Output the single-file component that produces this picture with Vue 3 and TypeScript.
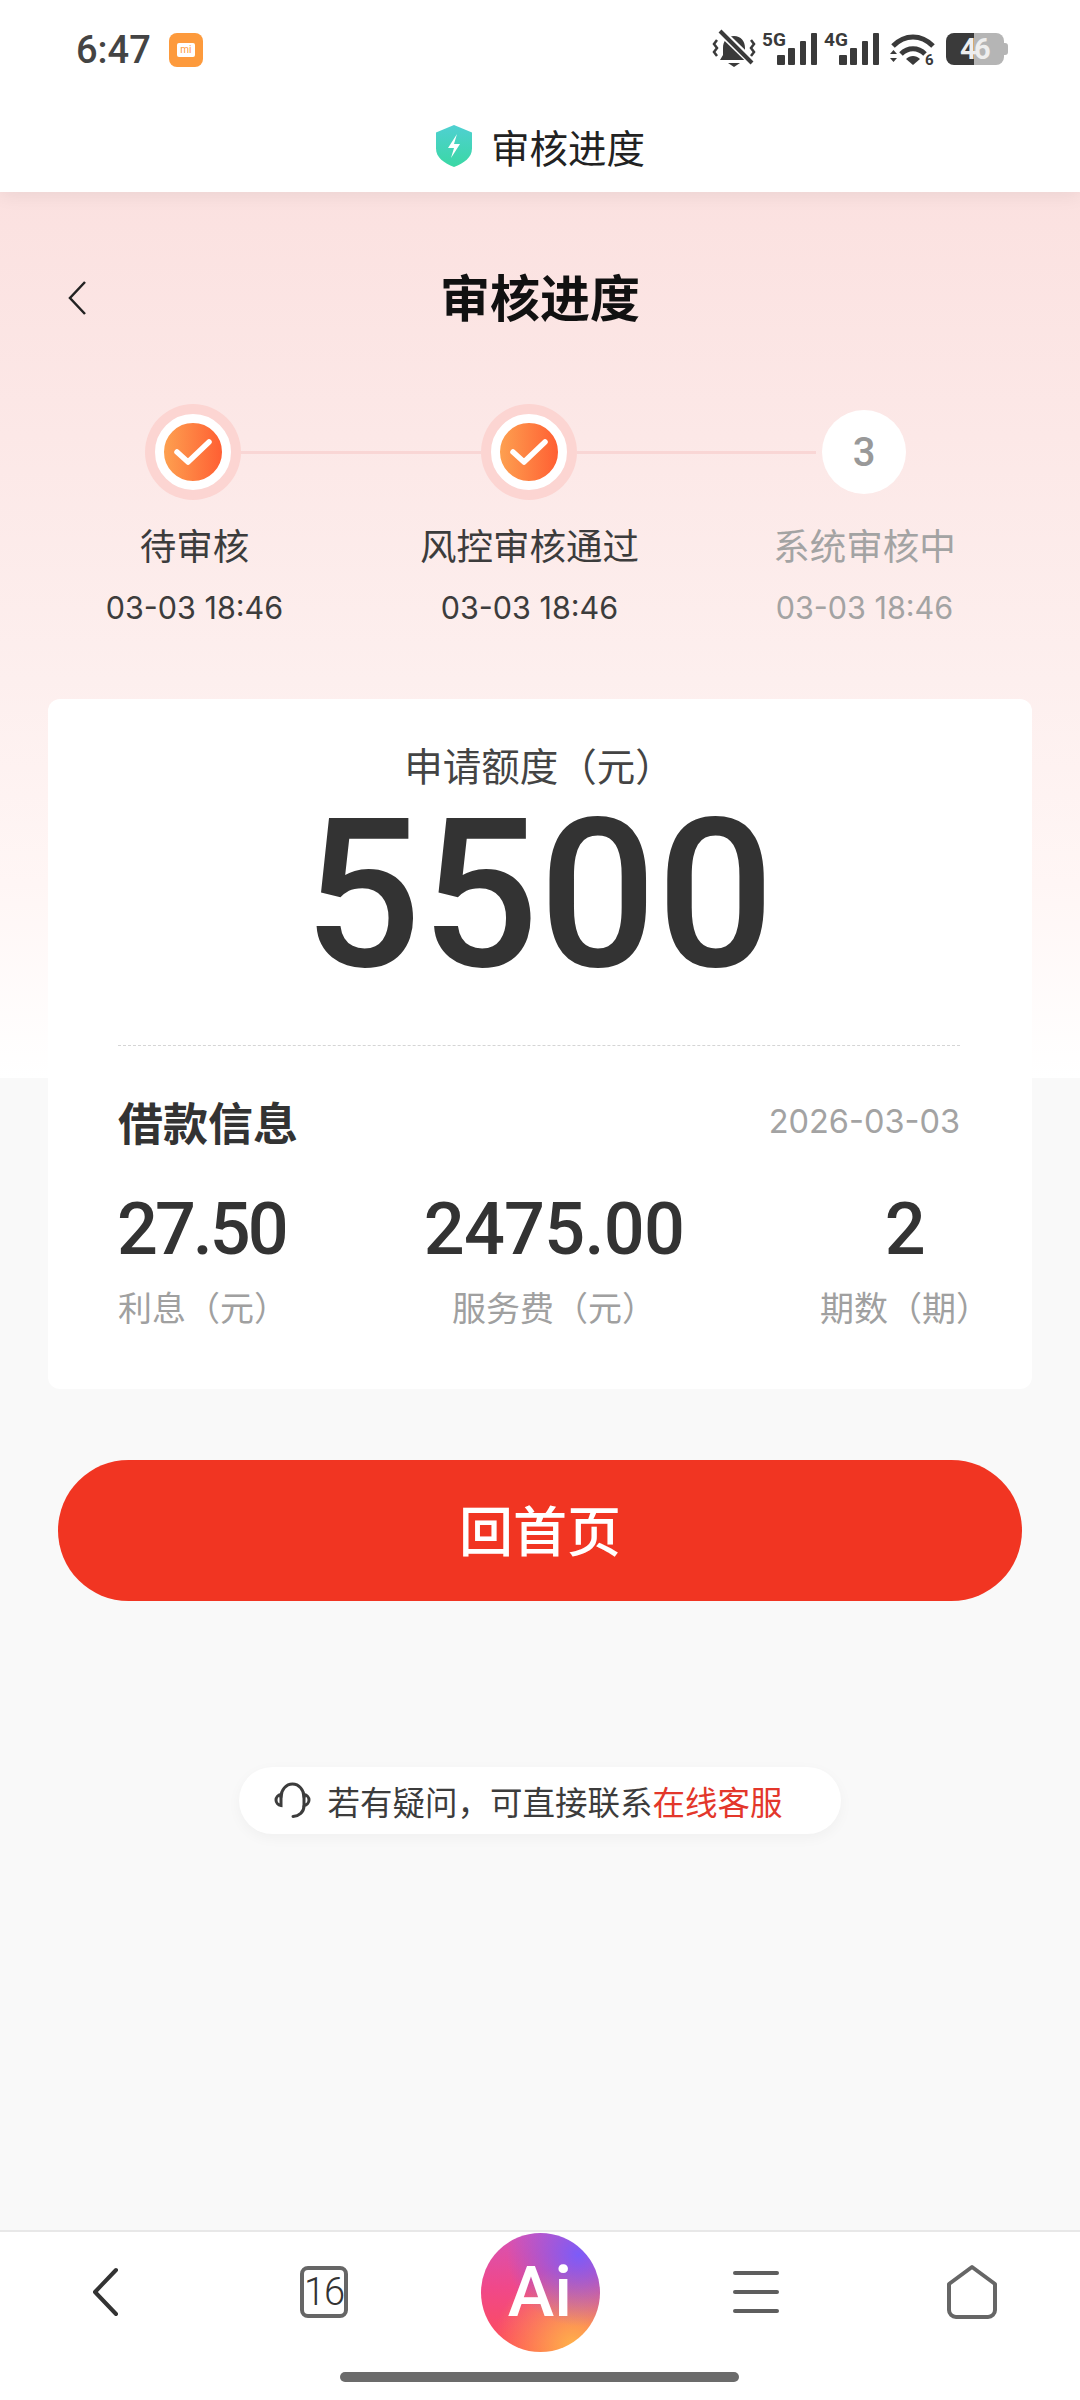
<template>
  <div class="page">
    <div class="status-bar">
      <div class="status-left">
        <span class="clock">6:47</span>
        <span class="mi-badge"><i class="mi-card">mi</i></span>
      </div>
      <svg class="status-icons" viewBox="705 25 305 50" width="305" height="50">
        <path d="M734 36c-7 0-11 5-11 12v7l-3 5h28l-3-5v-7c0-7-4-12-11-12z" fill="#3a3a3a" />
        <path d="M728 63h12l-6 4z" fill="#3a3a3a" />
        <path d="M719 30l34 33" stroke="#fff" stroke-width="8" />
        <path d="M720 31l32 32" stroke="#3a3a3a" stroke-width="4" />
        <path d="M717 40l-3 4 3 4-3 4 3 4M751 40l3 4-3 4 3 4-3 4" fill="none" stroke="#3a3a3a" stroke-width="2.500" />
        <text x="762" y="45.500" class="net">5G</text>
        <g fill="#3a3a3a">
          <rect x="777" y="55" width="8" height="10" rx="1" />
          <rect x="788" y="48" width="7" height="17" rx="1" />
          <rect x="800" y="41" width="6" height="24" rx="1" />
          <rect x="811" y="33" width="6" height="32" rx="1" />
          <rect x="839" y="55" width="8" height="10" rx="1" />
          <rect x="850" y="48" width="7" height="17" rx="1" />
          <rect x="862" y="41" width="6" height="24" rx="1" />
          <rect x="873" y="33" width="6" height="32" rx="1" />
        </g>
        <text x="824" y="45.500" class="net">4G</text>
        <g fill="none" stroke="#3a3a3a" stroke-width="5">
          <path d="M893 46c12-12 28-12 40 0" />
          <path d="M901 54c7-7 17-7 24 0" />
        </g>
        <path d="M913 65l-7-6c4-4 10-4 14 0z" fill="#3a3a3a" />
        <path d="M890 54l3.500-4 3.500 4zM890 58l3.500 4 3.500-4z" fill="#3a3a3a" />
        <text x="925" y="65" class="net small">6</text>
        <path d="M974 33h-20a8 8 0 0 0-8 8v16a8 8 0 0 0 8 8h20z" fill="#3a3a3a" />
        <path d="M974 33h22a8 8 0 0 1 8 8v16a8 8 0 0 1-8 8h-22z" fill="#b5b5b5" />
        <path d="M1004 43h1a3 3 0 0 1 3 3v6a3 3 0 0 1-3 3h-1z" fill="#b5b5b5" />
        <text x="960" y="59" class="batt">4</text>
        <text x="974" y="59" class="batt">6</text>
      </svg>
    </div>

    <div class="title-bar">
      <svg class="shield" viewBox="0 0 38 42" width="38" height="42">
        <defs>
          <linearGradient id="shieldFill" x1="0" y1="0" x2="0" y2="1">
            <stop offset="0" stop-color="#4fd0d2" />
            <stop offset="1" stop-color="#3ad8a4" />
          </linearGradient>
        </defs>
        <path d="M19 0l18 7.500v16c0 9-8 14.500-18 18.500C9 38 1 32.500 1 23.500v-16z" fill="url(#shieldFill)" />
        <path d="M22 9l-9 14h6l-3 10 9-14h-6z" fill="#fff" />
      </svg>
      <span>审核进度</span>
    </div>

    <main class="content">
      <header class="page-head">
        <svg class="head-back" viewBox="0 0 20 34" width="20" height="34">
          <path d="M18 1L3 17l15 16" fill="none" stroke="#222" stroke-width="2.500" />
        </svg>
        <h1>审核进度</h1>
      </header>

      <div class="track">
        <template v-for="(step, i) in steps" :key="step.label">
          <div class="node">
            <span v-if="step.done" class="ring">
              <span class="ring-inner">
                <svg viewBox="0 0 58 58" width="58" height="58">
                  <path d="M13 29l11 10 21-20" fill="none" stroke="#fff" stroke-width="5.500" stroke-linecap="round" stroke-linejoin="round" />
                </svg>
              </span>
            </span>
            <span v-else class="pending">{{ i + 1 }}</span>
          </div>
          <span v-if="i < steps.length - 1" class="link"></span>
        </template>
      </div>

      <div class="step-texts">
        <div v-for="step in steps" :key="step.label" class="step-text" :class="{ muted: !step.done }">
          <div class="step-label">{{ step.label }}</div>
          <div class="step-time">{{ step.time }}</div>
        </div>
      </div>

      <section class="card">
        <div class="apply-label">申请额度（元）</div>
        <div class="apply-amount">5500</div>
        <div class="dashed"></div>
        <div class="info-head">
          <h2>借款信息</h2>
          <span>2026-03-03</span>
        </div>
        <div class="stats">
          <div v-for="stat in stats" :key="stat.label" class="stat">
            <div class="stat-value">{{ stat.value }}</div>
            <div class="stat-label">{{ stat.label }}</div>
          </div>
        </div>
      </section>

      <button class="home-btn" type="button">回首页</button>

      <div class="help-pill">
        <svg viewBox="0 0 37 37" width="37" height="37" fill="none" stroke="#3c3c3c" stroke-width="3" stroke-linecap="round">
          <path d="M7 15c0-7 5-13 11.500-13S30 8 30 15" />
          <path d="M7 12.500c-3 .5-5 3-5 5.500s2 5 5 5.500z" />
          <path d="M30 12.500c3 .5 5 3 5 5.500s-2 5-5 5.500z" />
          <path d="M30 24c0 6-5 10-11 10.500" />
        </svg>
        <span>若有疑问，可直接联系<em>在线客服</em></span>
      </div>
    </main>

    <footer class="bottom-nav">
      <div class="nav-row">
        <div class="nav-item">
          <svg viewBox="0 0 30 50" width="30" height="50">
            <path d="M26 3L5 25l21 22" fill="none" stroke="#333" stroke-width="4" stroke-linecap="round" stroke-linejoin="round" />
          </svg>
        </div>
        <div class="nav-item"><span class="tab-count">16</span></div>
        <div class="nav-item"><span class="ai-badge">Ai</span></div>
        <div class="nav-item">
          <span class="menu-lines"><i></i><i></i><i></i></span>
        </div>
        <div class="nav-item">
          <svg viewBox="0 0 54 56" width="54" height="56">
            <path d="M27 3L50 20v26a7 7 0 0 1-7 7H11a7 7 0 0 1-7-7V20z" fill="none" stroke="#666" stroke-width="4" stroke-linejoin="round" />
          </svg>
        </div>
      </div>
      <div class="home-bar"></div>
    </footer>
  </div>
</template>

<script setup lang="ts">
const steps = [
  { label: '待审核', time: '03-03 18:46', done: true },
  { label: '风控审核通过', time: '03-03 18:46', done: true },
  { label: '系统审核中', time: '03-03 18:46', done: false },
]

const stats = [
  { value: '27.50', label: '利息（元）' },
  { value: '2475.00', label: '服务费（元）' },
  { value: '2', label: '期数（期）' },
]
</script>

<style>
html, body { margin: 0; background: #f9f9f9; }
</style>

<style scoped>
.page {
  display: flex;
  flex-direction: column;
  width: 1080px;
  height: 2400px;
  overflow: hidden;
  font-family: Roboto, "Noto Sans CJK SC", sans-serif;
  color: #333;
}

/* status bar */
.status-bar {
  display: flex;
  align-items: center;
  justify-content: space-between;
  height: 100px;
  padding: 0 70px 0 76px;
  background: #fff;
}
.status-left { display: flex; align-items: center; gap: 18px; }
.clock { font-size: 38px; font-weight: 500; color: #444; }
.mi-badge {
  display: flex;
  align-items: center;
  justify-content: center;
  width: 34px;
  height: 34px;
  border-radius: 8px;
  background: #fd9a3c;
}
.mi-card {
  width: 18px;
  height: 14px;
  border-radius: 2px;
  background: #fff;
  color: #fd9a3c;
  font-size: 10px;
  font-style: normal;
  line-height: 14px;
  text-align: center;
}
.net { font-family: Roboto, sans-serif; font-size: 19px; font-weight: 700; fill: #3a3a3a; }
.net.small { font-size: 15px; }
.batt { font-family: Roboto, sans-serif; font-size: 29px; font-weight: 700; fill: #eee; }

.title-bar {
  position: relative;
  z-index: 1;
  display: flex;
  align-items: center;
  justify-content: center;
  gap: 18px;
  height: 92px;
  background: #fff;
  box-shadow: 0 3px 18px rgba(0, 0, 0, 0.07);
  clip-path: inset(0 0 -40px 0);
  font-size: 38.500px;
  color: #222;
}

/* content */
.content {
  flex: 1;
  background: linear-gradient(#fbe1e0, #fdefee 55%, #fff6f5 78%, #fff) top / 100% 886px no-repeat, #f9f9f9;
}
.page-head {
  position: relative;
  display: flex;
  align-items: center;
  justify-content: center;
  height: 108px;
  margin-top: 49px;
}
.head-back { position: absolute; left: 67px; top: 40px; }
.page-head h1 { margin: 0; font-size: 50px; font-weight: 700; color: #111; }

.track {
  display: flex;
  align-items: center;
  margin-top: 55px;
  padding-left: 145px;
}
.node {
  display: flex;
  align-items: center;
  justify-content: center;
  width: 96px;
  height: 96px;
}
.link { width: 239.500px; height: 3px; background: #f9d6d5; }
.ring {
  display: flex;
  align-items: center;
  justify-content: center;
  width: 96px;
  height: 96px;
  border-radius: 50%;
  background: #fcd5d2;
}
.ring-inner {
  display: flex;
  width: 58px;
  height: 58px;
  border: 9px solid #fff;
  border-radius: 50%;
  background: linear-gradient(90deg, #fda050, #ff5f33);
}
.pending {
  display: flex;
  align-items: center;
  justify-content: center;
  width: 84px;
  height: 84px;
  border-radius: 50%;
  background: #fff;
  color: #999;
  font-size: 40px;
  font-weight: 500;
}

.step-texts {
  display: grid;
  grid-template-columns: repeat(3, 335px);
  margin-top: 23px;
  margin-left: 27px;
  text-align: center;
}
.step-label { font-size: 36.500px; line-height: 50px; color: #3c3c3c; }
.step-time { margin-top: 15px; font-family: Inter, Roboto, sans-serif; font-size: 30.500px; line-height: 40px; color: #3c3c3c; }
.muted .step-label,
.muted .step-time { color: #a3a3a3; }

.card {
  margin: 71px 48px 0;
  padding: 47px 72px 58px 70px;
  border-radius: 12px;
  background: #fff;
}
.apply-label { font-size: 38.500px; line-height: 44px; text-align: center; color: #444; }
.apply-amount {
  margin-top: 6px;
  font-size: 207px;
  font-weight: 500;
  line-height: 200px;
  text-align: center;
  color: #333;
}
.dashed { margin-top: 49px; border-top: 1px dashed #d5d5d5; }
.info-head {
  display: flex;
  align-items: center;
  justify-content: space-between;
  height: 60px;
  margin-top: 45px;
}
.info-head h2 { margin: 0; font-size: 45px; font-weight: 700; color: #333; }
.info-head span { font-family: Inter, Roboto, sans-serif; font-size: 32.500px; color: #a3a3a3; }

.stats {
  display: flex;
  justify-content: space-between;
  margin-top: 39px;
  margin-right: -30px;
}
.stat { text-align: center; }
.stat:first-child { text-align: left; }
.stat-value { font-size: 72px; font-weight: 500; line-height: 80px; letter-spacing: -0.700px; color: #333; }
.stat:first-child .stat-value { margin-left: -1px; letter-spacing: -3px; }
.stat-label { margin-top: 17px; font-size: 34px; line-height: 44px; color: #a0a0a0; }

.home-btn {
  display: block;
  width: 964px;
  height: 141px;
  margin: 71px 58px 0;
  padding: 0 0 5px;
  border: none;
  border-radius: 71px;
  background: #f13522;
  color: #fff;
  font-family: inherit;
  font-size: 54px;
  font-weight: 500;
}

.help-pill {
  display: flex;
  align-items: center;
  gap: 16px;
  width: fit-content;
  height: 67px;
  margin: 166px auto 0;
  padding: 0 58px 0 35px;
  border-radius: 34px;
  background: #fff;
  box-shadow: 0 4px 14px rgba(0, 0, 0, 0.04);
  font-size: 32.500px;
  color: #3c3c3c;
}
.help-pill em { font-style: normal; color: #e3372b; }

/* bottom nav */
.bottom-nav {
  height: 168px;
  border-top: 2px solid #e8e8e8;
  background: #fff;
}
.nav-row {
  display: grid;
  grid-template-columns: repeat(5, 216px);
  height: 120px;
}
.nav-item { display: flex; align-items: center; justify-content: center; }
.nav-item:first-child svg { margin-left: -6px; }
.tab-count {
  display: flex;
  align-items: center;
  justify-content: center;
  box-sizing: border-box;
  width: 48px;
  height: 52px;
  border: 4px solid #666;
  border-radius: 8px;
  font-size: 38px;
  font-weight: 300;
  letter-spacing: -1px;
  color: #333;
}
.ai-badge {
  display: flex;
  align-items: center;
  justify-content: center;
  width: 119px;
  height: 119px;
  border-radius: 50%;
  background:
    radial-gradient(circle at 82% 18%, #7c5cf8 0, rgba(124, 92, 248, 0) 52%),
    radial-gradient(circle at 78% 95%, #ffb24a 0, rgba(255, 178, 74, 0) 55%),
    linear-gradient(180deg, #d653b5, #f0488a 45%, #ff4d55);
  color: #fff;
  font-size: 70px;
  font-weight: 500;
}
.menu-lines { display: flex; flex-direction: column; gap: 15px; width: 46px; }
.menu-lines i { display: block; height: 4px; border-radius: 2px; background: #5e5e5e; }
.home-bar {
  width: 399px;
  height: 10px;
  margin: 20px 0 0 340px;
  border-radius: 5px;
  background: #6b6b6b;
}
</style>
